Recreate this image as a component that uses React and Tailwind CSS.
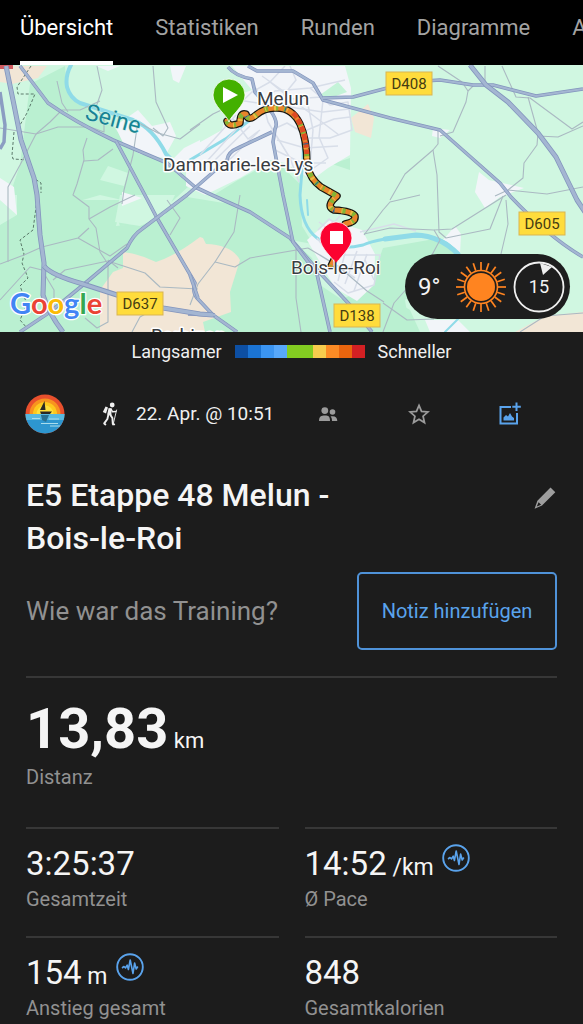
import React from 'react';

const tabs = ['Übersicht', 'Statistiken', 'Runden', 'Diagramme', 'A'];

const legendColors = [
  'bg-[#0d4fa3]', 'bg-[#1b74d4]', 'bg-[#3b95f2]', 'bg-[#57a8fb]', 'bg-[#82cc21]',
  'bg-[#82cc21]', 'bg-[#f6cc4d]', 'bg-[#fb8b25]', 'bg-[#ea650e]', 'bg-[#d32023]',
];

// Map geometry, in map units (583 wide, y from 65 to 332)
const minorRoads = [
  'M0 128 L36 134 L50 122 L62 110 L80 110 L100 101',
  'M36 134 L58 127 L90 127 L104 132 L104 120 L98 110',
  'M57 81 L62 103 L68 112',
  'M36 134 L20 165 L8 187 L8 262',
  'M87 138 L83 150 L84 160 L77 184 L73 195 L89 207 L89 219 L96 228 L100 252 L108 264 L108 322 L97 328 L85 318',
  'M113 149 L98 160 L84 161',
  'M137 128 L133 155 L124 190 L122 204',
  'M89 219 L110 207 L135 195',
  'M42 247 L78 238 L89 228',
  'M0 264 L24 255 L42 247',
  'M0 300 L30 267 L42 270 L54 290 L54 310',
  'M78 238 L110 256 L127 244',
  'M53 280 L65 270 L108 261 L145 273 L160 287 L198 289',
  'M108 260 L118 268',
  'M167 200 L180 218 L170 235',
  'M153 66 L156 102 L168 128 L163 136 L153 128',
  'M97 66 L102 90 L96 107',
  'M133 120 L158 133 L180 139 L200 124',
  'M190 130 L213 114 L230 106',
  'M240 195 L234 232 L215 262 L235 267 L250 258 L308 248',
  'M215 262 L198 284 L190 305',
  'M132 332 L140 317 L154 309',
  'M296 247 L296 298 L301 332',
  'M308 248 L338 266 L367 291 L384 302',
  'M438 128 L438 144 L433 150 L405 174 L390 200',
  'M433 150 L437 175 L439 232 L446 238 L490 229 L503 196',
  'M438 66 L462 82 L468 91 L466 102 L453 132 L440 136',
  'M468 91 L473 86',
  'M485 66 L485 85',
  'M502 66 L516 97 L530 98 L572 129 L583 122',
  'M528 97 L538 133 L537 145 L524 163 L523 178 L508 190 L495 196',
  'M538 136 L558 137 L583 126',
  'M508 190 L547 194 L583 187',
  'M506 200 L508 224 L501 254',
  'M364 235 L383 210 L390 202 L420 195',
  'M364 234 L390 228 L434 230 L440 240 L425 268',
  'M383 332 L394 303 L410 285',
  'M383 303 L407 320 L434 319',
  'M434 230 L452 229 L506 195',
  'M520 332 L545 316 L583 313',
];

const streets = [
  'M225 98 L258 103 L275 91 L310 88 L345 80',
  'M256 88 L263 103 L268 122 L290 158 L299 182',
  'M290 66 L296 80 L283 96 L286 110',
  'M285 66 L270 82 L252 92 L232 111',
  'M310 88 L330 105 L348 102 L352 130 L330 138 L304 138',
  'M323 100 L319 137 L328 158 L308 172',
  'M233 119 L248 139 L260 130',
  'M200 155 L236 115 M208 160 L241 124 M215 160 L250 126 M225 164 L258 132',
  'M270 82 L291 99 L322 97 M262 76 L286 93',
  'M276 128 L287 123 L302 132 L334 119 L350 117',
  'M277 140 L305 148 L338 146 M275 150 L302 163 L326 163',
  'M298 104 L339 135 M306 95 L313 130 L310 166',
  'M265 100 L296 108 L323 112 L349 109',
  'M317 238 L330 255 L380 255 L374 285 L348 293 L334 282',
  'M345 253 L338 281 M357 251 L345 284 M320 255 L355 278 M367 254 L354 291',
  'M318 230 L329 219 L345 229 M319 222 L328 229 L340 216',
  'M360 232 L394 224 L416 231 M365 260 L374 280',
];

const mainRoads = [
  'M20 66 L48 103 Q75 122 113 140 L167 163 L195 187 L212 195 L250 212 L290 238 L320 273 L350 305 L372 332',
  'M116 141 L147 199 L157 218 L195 283 Q192 292 197 298 L213 315 L237 332',
  'M20 332 L50 312 L83 285 L127 248 Q133 235 142 229 L187 195 L227 160 Q228 152 238 148 L272 132',
  'M228 67 Q235 76 252 79 L255 92 L270 110 Q279 122 275 129 L273 142 L283 195 L293 242 L317 274 L330 332',
  'M248 66 L257 71 L293 71 L313 83 L323 100 L390 118 L440 130 L500 183 L511 197 Q550 238 583 257',
  'M323 98 L353 97 L410 82 L440 80 L473 85 L493 85 L536 96 L583 89',
  'M190 275 L198 298',
  'M188 314 L215 315',
];

const bigRoads = [
  'M6 66 L14 105 L21 140 L34 178 L37 195 L40 235 L44 263 L43 295 Q49 314 63 332',
  'M470 65 L486 85 L508 102 L538 133 L556 157 L577 200 L585 212',
  'M44 266 Q51 275 83 284 L117 295 L163 308 L200 314 L213 315',
];

const trackPath =
  'M227 121 Q229 128 240 123 Q240 112 246 114 Q248 122 256 115 Q264 108 275 108 Q292 107 300 124 Q307 139 307 165 Q310 179 321 187 L337 196 Q325 206 334 210 Q352 211 355 216 Q356 222 345 224 L341 245 L331 266';

const shields = [
  { x: 386, y: 72, name: 'D408' },
  { x: 519, y: 212, name: 'D605' },
  { x: 117, y: 292, name: 'D637' },
  { x: 334, y: 304, name: 'D138' },
];

const Pin = ({ x, y, color, children }) => (
  <g transform={`translate(${x} ${y})`}>
    <path
      d="M0 0 C-2 -7 -16 -16 -16 -27 A16 16 0 0 1 16 -27 C16 -16 2 -7 0 0 Z"
      fill={color}
      stroke="#ffffff"
      strokeWidth="0.8"
    />
    {children}
  </g>
);

const RouteMap = () => (
  <svg
    viewBox="0 65 583 267"
    preserveAspectRatio="xMidYMid slice"
    className="block h-full w-full"
    role="img"
    aria-label="Karte"
  >
    <rect x="0" y="65" width="583" height="267" fill="#d0f7e1" />

    {/* woods */}
    <g fill="#baf0d1">
      <path d="M30 84 L65 66 L67 90 L80 104 L112 124 L127 145 L165 164 L190 185 L150 222 L120 226 L116 214 L122 200 L100 195 L0 224 L20 165 Z" />
      <path d="M0 222 L25 200 L122 200 L116 226 L135 224 L187 197 L230 204 L292 240 L312 258 L320 285 L350 305 L372 332 L0 332 Z" />
      <path d="M238 180 L275 160 L300 184 L302 226 L313 244 L290 240 L212 196 Z" />
      <path d="M332 164 L350 158 L350 170 Z" />
      <path d="M383 248 L440 238 L458 254 L405 300 L410 332 L358 332 L368 290 Z" />
      <path d="M340 300 L372 286 L410 310 L420 332 L360 332 Z" />
    </g>
    <g fill="#d0f7e1">
      <path d="M0 195 L17 195 L17 215 L0 225 Z M100 180 L108 166 L128 173 L124 186 Z" />
      <path d="M120 195 L175 195 L165 215 L140 226 L115 222 Z" />
    </g>

    {/* built-up areas */}
    <g fill="#f2f5f9">
      <path d="M96 66 L120 66 L108 71 Z M170 66 L186 66 L179 83 L173 80 Z" />
      <path d="M115 126 L138 110 L152 126 L170 122 L176 136 L164 158 L140 154 L124 145 Z" />
      <path d="M186 150 L222 130 L230 98 L252 90 L232 66 L345 66 L351 88 L350 155 L328 168 L312 180 L285 163 L270 160 L240 178 L205 195 L186 186 Z" />
      <path d="M184 148 L200 140 L200 160 L170 162 Z M122 192 L142 198 L122 206 Z" />
      <path d="M307 240 L330 220 L362 230 L375 254 L374 285 L357 301 L335 288 Z" />
      <path d="M479 172 L489 180 L524 188 L500 197 L485 208 L475 192 Z M433 128 L450 130 L440 138 L432 136 Z" />
      <path d="M443 240 L455 226 L461 234 L460 254 Z M425 320 L458 320 L470 332 L430 332 Z M0 178 L14 187 L17 215 L0 200 Z" />
    </g>
    <path d="M320 95 L338 82 L347 92 L328 99 Z" fill="#c4f3d8" />

    {/* fields */}
    <g fill="#f2e6d6">
      <path d="M13 66 L47 66 L38 78 L12 84 L0 82 L0 66 Z" />
      <path d="M100 332 L100 290 L113 272 L123 268 L123 252 Q140 254 156 262 Q175 256 200 237 L203 238 L206 244 Q232 245 240 260 L230 292 L231 312 L203 322 L205 332 Z" />
      <path d="M351 118 L368 104 L374 118 L371 138 L355 132 Z" />
      <path d="M515 332 L545 316 L583 312 L583 332 Z" />
    </g>
    <rect x="0" y="65" width="13" height="4" fill="#cf5b60" />

    {/* rivers */}
    <g fill="none" stroke="#8fdbe8" strokeLinecap="round" strokeLinejoin="round">
      <path d="M71 65 Q65 76 67 87 Q70 98 80 103 L133 120 Q153 128 166 154 L170 158" strokeWidth="4" />
      <path d="M190 160 L227 138 L246 123 L270 108 Q290 104 298 122 Q306 140 302 170 L300 195 Q301 226 317 238 Q335 252 363 245 Q378 238 416 236 Q441 236 452 248 L461 262" strokeWidth="3" />
      <path d="M385 239 L416 235 Q440 236 458 254" strokeWidth="5" />
      <path d="M307 200 L308 215 M445 332 L462 315" strokeWidth="2" />
    </g>

    {/* dashed borders */}
    <g fill="none" stroke="#4f6b5d" strokeWidth="0.9" strokeDasharray="3 2">
      <path d="M31 66 L17 87 L18 94 L35 94 L27 113 L20 125 M14 132 L12 155 L13 159 L29 160 L32 177 L41 183 L41 193" />
      <path d="M37 200 L33 230 L20 240 L24 254 L22 263 L28 278 L20 286 L27 304 L20 320 L27 328" />
    </g>

    <g fill="none" strokeLinejoin="round">
      {streets.map((d) => (
        <path key={d} d={d} stroke="#d8dee9" strokeWidth="1.5" />
      ))}
      {minorRoads.map((d) => (
        <path key={d} d={d} stroke="#aab9c2" strokeWidth="1.1" />
      ))}
      <path d="M0 92 L5 125 L4 142 L0 149" stroke="#8b9dc2" strokeWidth="3.5" />
      {mainRoads.map((d) => (
        <g key={d}>
          <path d={d} stroke="#8395bd" strokeWidth="3.6" />
          <path d={d} stroke="#a4b6d2" strokeWidth="2.2" />
        </g>
      ))}
      {bigRoads.map((d) => (
        <g key={d}>
          <path d={d} stroke="#8395bd" strokeWidth="5" />
          <path d={d} stroke="#a4b6d2" strokeWidth="3.4" />
        </g>
      ))}
    </g>

    {/* recorded track, coloured by pace */}
    <g fill="none" strokeLinejoin="round" strokeLinecap="round">
      <path d={trackPath} stroke="#15150f" strokeWidth="7.5" />
      <path d={trackPath} stroke="#e8842b" strokeWidth="5" />
    </g>
    <g fill="none" strokeWidth="5" strokeLinejoin="round">
      <path d={trackPath} stroke="#84b534" strokeDasharray="3 6 2 9 4 7" />
      <path d={trackPath} stroke="#e9bf45" strokeDasharray="2 11 1 8" strokeDashoffset="5" />
      <path d="M293 113 Q298 118 302 128 Q306 139 307 154" stroke="#df4a22" strokeDasharray="6 2" />
      <path d={trackPath} stroke="#27648e" strokeDasharray="1 41" strokeDashoffset="12" />
    </g>

    {/* place names */}
    <g
      fill="#3a3d42"
      stroke="#ffffff"
      strokeWidth="3"
      strokeLinejoin="round"
      paintOrder="stroke"
      fontFamily="Roboto, sans-serif"
      fontSize="19"
    >
      <text x="257" y="105">Melun</text>
      <text x="163" y="171">Dammarie-les-Lys</text>
      <text x="151" y="342">Barbizon</text>
      <text x="84" y="119" transform="rotate(15 84 119)" fill="#178394" stroke="#c5f1e6" strokeWidth="1" fontSize="23">
        Seine
      </text>
    </g>

    <Pin x={229} y={122} color="#43b000">
      <path d="M-6 -35 L9 -27 L-6 -19 Z" fill="#ffffff" />
    </Pin>
    <Pin x={336} y={265} color="#fb0330">
      <rect x="-6" y="-34" width="13" height="13" fill="#ffffff" />
    </Pin>
    <text
      x="291"
      y="274"
      fill="#3a3d42"
      stroke="#ffffff"
      strokeWidth="2"
      strokeLinejoin="round"
      paintOrder="stroke"
      fontFamily="Roboto, sans-serif"
      fontSize="19"
    >
      Bois-le-Roi
    </text>
    <path d="M332 256 L340 256 L336 263 Z" fill="#fb0330" />

    {shields.map(({ x, y, name }) => (
      <g key={name}>
        <rect x={x} y={y} width="46" height="23" fill="#ffdc3c" stroke="#d9b552" strokeWidth="1" />
        <text x={x + 23} y={y + 17} textAnchor="middle" fill="#453c12" fontFamily="Roboto, sans-serif" fontSize="15">
          {name}
        </text>
      </g>
    ))}

    <text
      x="10"
      y="314"
      fontFamily="Lato, sans-serif"
      fontSize="29"
      fontWeight="700"
      stroke="#ffffff"
      strokeWidth="2.5"
      strokeLinejoin="round"
      paintOrder="stroke"
    >
      <tspan fill="#4285f4">G</tspan>
      <tspan fill="#ea4335">o</tspan>
      <tspan fill="#fbbc05">o</tspan>
      <tspan fill="#4285f4">g</tspan>
      <tspan fill="#34a853">l</tspan>
      <tspan fill="#ea4335">e</tspan>
    </text>
  </svg>
);

const sunRays = Array.from({ length: 20 }, (_, i) => i * 18);

const SunIcon = () => (
  <svg viewBox="-26 -26 52 52" className="ml-2 size-[52px]" aria-hidden="true">
    <circle r="14" fill="#ff8420" />
    <circle r="16.5" fill="none" stroke="#ff8420" strokeWidth="1.6" />
    {sunRays.map((angle) => (
      <path key={angle} d="M0 -17 V-25" stroke="#ff8420" strokeWidth="1.7" transform={`rotate(${angle})`} />
    ))}
  </svg>
);

const WeatherBadge = () => (
  <div className="absolute right-[13px] bottom-[13px] flex h-[65px] w-[165px] items-center justify-between rounded-full bg-[#1e1e1e] pr-[5px] pl-[13px] text-[#f3f3f3]">
    <span className="text-[24px] leading-8">9°</span>
    <SunIcon />
    <div className="relative flex size-[52px] items-center justify-center">
      <svg viewBox="-26 -26 52 52" className="absolute inset-0" aria-hidden="true">
        <circle r="24.5" fill="none" stroke="#f0f0f0" strokeWidth="1.8" />
        <path d="M1 -24 L13 -20 L4 -12 Z" fill="#f0f0f0" />
      </svg>
      <span className="text-[18px] leading-6">15</span>
    </div>
  </div>
);

const Avatar = () => (
  <svg viewBox="0 0 40 40" className="size-10 shrink-0" role="img" aria-label="Profil">
    <clipPath id="avatarClip">
      <circle cx="20" cy="20" r="19.5" />
    </clipPath>
    <g clipPath="url(#avatarClip)">
      <rect width="40" height="40" fill="#e8502d" />
      <circle cx="20" cy="20" r="15.5" fill="#f8941f" />
      <circle cx="20" cy="20" r="12" fill="#fdc81e" />
      <circle cx="20" cy="20" r="8.5" fill="#ffe03b" />
      <rect y="20" width="40" height="20" fill="#2d96cf" />
      <rect y="20" width="40" height="6" fill="#58b9df" />
      <path d="M7 24.5 H15 M24 25 H34 M16 29.5 H33 M25 32 H35" stroke="#a9ddec" strokeWidth="1" />
      <path d="M16 21 H24 L21 28 L17 26 Z" fill="#28708f" />
      <path d="M19.5 7 L20.5 16 L15 16 Z M15 17.5 H27 L25 20 H16 Z" fill="#2b2924" />
    </g>
  </svg>
);

const HikerIcon = () => (
  <svg viewBox="0 0 16 24" className="ml-[37px] h-6 w-4 shrink-0 text-[#f0f0f0]" aria-hidden="true">
    <circle cx="10.2" cy="3" r="2.4" fill="currentColor" />
    <path d="M3.6 4.6 L6 5.4 L4 11.4 L0.8 10 Z" fill="currentColor" />
    <path d="M6.6 6 L9.6 6.4 L9.4 13 L5.2 12.6 Z" fill="currentColor" />
    <g fill="none" stroke="currentColor" strokeLinecap="round" strokeLinejoin="round">
      <path d="M9 7 L10.6 9.8 L13.8 9.6" strokeWidth="1.5" />
      <path d="M8 12.4 L10.4 16 L10.8 22 L12.2 22.4" strokeWidth="1.9" />
      <path d="M6.4 12.4 L5.4 17 L2.2 21.4 L3.4 22.4" strokeWidth="1.9" />
      <path d="M14.6 8 L11 23" strokeWidth="0.9" />
    </g>
  </svg>
);

const PeopleIcon = () => (
  <svg viewBox="0 0 20 16" className="h-4 w-5" fill="currentColor" aria-hidden="true">
    <circle cx="6.8" cy="4.6" r="3.4" />
    <path d="M1 15 C1 10.5 3 9.5 7 9.5 C10.5 9.5 12 10.5 12 15 Z" />
    <circle cx="14.5" cy="6" r="2.8" />
    <path d="M12.5 10.4 C17 9.4 19.3 11.5 19.3 15 H14 C14 12.8 13.6 11.3 12.5 10.4 Z" />
  </svg>
);

const StarIcon = () => (
  <svg viewBox="0 0 20 20" className="size-[22px]" fill="none" stroke="currentColor" strokeWidth="1.6" aria-hidden="true">
    <path d="M10 2.2 L12.3 7.6 L18.1 8.1 L13.7 12 L15 17.8 L10 14.7 L5 17.8 L6.3 12 L1.9 8.1 L7.7 7.6 Z" />
  </svg>
);

const AddImageIcon = () => (
  <svg viewBox="0 0 24 24" className="size-6" aria-hidden="true">
    <path d="M13 5 H2.5 V21.5 H19 V11" fill="none" stroke="currentColor" strokeWidth="2" />
    <path d="M5.5 18.5 L5.5 15.5 L8 13 L10 14.5 L12 11 L14 14.5 L16 16 V18.5 Z" fill="currentColor" />
    <path d="M18.5 0.5 V9 M14.3 4.8 H22.8" stroke="currentColor" strokeWidth="2" />
  </svg>
);

const PencilIcon = () => (
  <svg viewBox="0 0 24 24" className="size-6" fill="currentColor" aria-hidden="true">
    <path d="M17.5 1.5 L22.3 6.3 L9 19.6 L1.6 22.8 L4.4 14.8 Z M5.6 16.2 L3.8 20.6 L8.1 18.7 Z" fillRule="evenodd" />
  </svg>
);

const PulseIcon = () => (
  <svg viewBox="0 0 28 28" className="size-7" fill="none" stroke="#5aa3ec" strokeLinejoin="round" aria-hidden="true">
    <circle cx="14" cy="14" r="12.8" strokeWidth="1.9" />
    <path d="M6 15 L8 13.5 L9.5 15 L11.2 12.2 L12.4 16.5 L14.2 7 L17 20.5 L18.6 10 L20.2 16 L21.8 13.5" strokeWidth="1.6" />
  </svg>
);

const Stat = ({ value, unit, label, pulse }) => (
  <div className="h-[109px] border-t-2 border-[#373737] pt-[15px]">
    <div className="flex h-10 items-start gap-2">
      <p className="text-[33px] leading-10 text-[#f5f5f5]">
        {value}
        {unit && <span className="text-[23px]"> {unit}</span>}
      </p>
      {pulse && <PulseIcon />}
    </div>
    <p className="text-[20px] leading-[30px] text-[#919191]">{label}</p>
  </div>
);

const App = () => {
  return (
    <div className="min-h-screen overflow-hidden bg-[#1c1c1c] font-['Roboto',sans-serif]">
      <nav className="flex h-[65px] gap-[42px] overflow-hidden bg-black pl-5 text-[22px] leading-[56px]">
        {tabs.map((tab, index) => (
          <a
            key={tab}
            href="#"
            className={`h-full shrink-0 ${index === 0 ? 'border-b-4 border-white text-white' : 'text-[#a3a3a3]'}`}
          >
            {tab}
          </a>
        ))}
      </nav>

      <div className="relative h-[267px]">
        <RouteMap />
        <WeatherBadge />
      </div>

      <div className="flex h-[38px] items-center justify-center gap-[13px] text-[18px] text-[#f0f0f0]">
        <span>Langsamer</span>
        <div className="flex">
          {legendColors.map((color, index) => (
            <span key={index} className={`h-[13px] w-[13px] ${color}`} />
          ))}
        </div>
        <span>Schneller</span>
      </div>

      <div className="mt-6 flex h-10 items-center pr-7 pl-[25px]">
        <Avatar />
        <HikerIcon />
        <span className="ml-[18px] text-[19px] whitespace-nowrap text-[#f0f0f0]">22. Apr. @ 10:51</span>
        <div className="ml-auto flex text-[#9b9b9b]">
          <button aria-label="Sichtbarkeit" className="flex w-[91px] items-center justify-center">
            <PeopleIcon />
          </button>
          <button aria-label="Favorit" className="flex w-[91px] items-center justify-center">
            <StarIcon />
          </button>
          <button aria-label="Foto hinzufügen" className="flex w-[91px] items-center justify-center text-[#5aa3ec]">
            <AddImageIcon />
          </button>
        </div>
      </div>

      <main className="px-[26px] pt-10">
        <div className="flex items-start justify-between">
          <h1 className="max-w-[360px] text-[32px] leading-[43px] font-medium text-[#f5f5f5]">
            E5 Etappe 48 Melun - Bois-le-Roi
          </h1>
          <button aria-label="Bearbeiten" className="mt-3 text-[#9e9e9e]">
            <PencilIcon />
          </button>
        </div>

        <div className="mt-3 flex items-center justify-between">
          <p className="text-[26px] text-[#919191]">Wie war das Training?</p>
          <button className="h-[78px] w-[200px] rounded-[5px] border-2 border-[#4f92d8] text-[20px] text-[#5aa3ec]">
            Notiz hinzufügen
          </button>
        </div>

        <section className="mt-[26px] h-[151px] border-t-2 border-[#373737] pt-[18px]">
          <p className="text-[56px] leading-[66px] font-bold text-[#f5f5f5]">
            13,83<span className="text-[22px] leading-none font-normal"> km</span>
          </p>
          <p className="text-[20px] leading-[30px] text-[#919191]">Distanz</p>
        </section>

        <section className="grid grid-cols-2 gap-x-[26px]">
          <Stat value="3:25:37" label="Gesamtzeit" />
          <Stat value="14:52" unit="/km" label="Ø Pace" pulse />
          <Stat value="154" unit="m" label="Anstieg gesamt" pulse />
          <Stat value="848" label="Gesamtkalorien" />
        </section>
      </main>
    </div>
  );
};

export default App;
